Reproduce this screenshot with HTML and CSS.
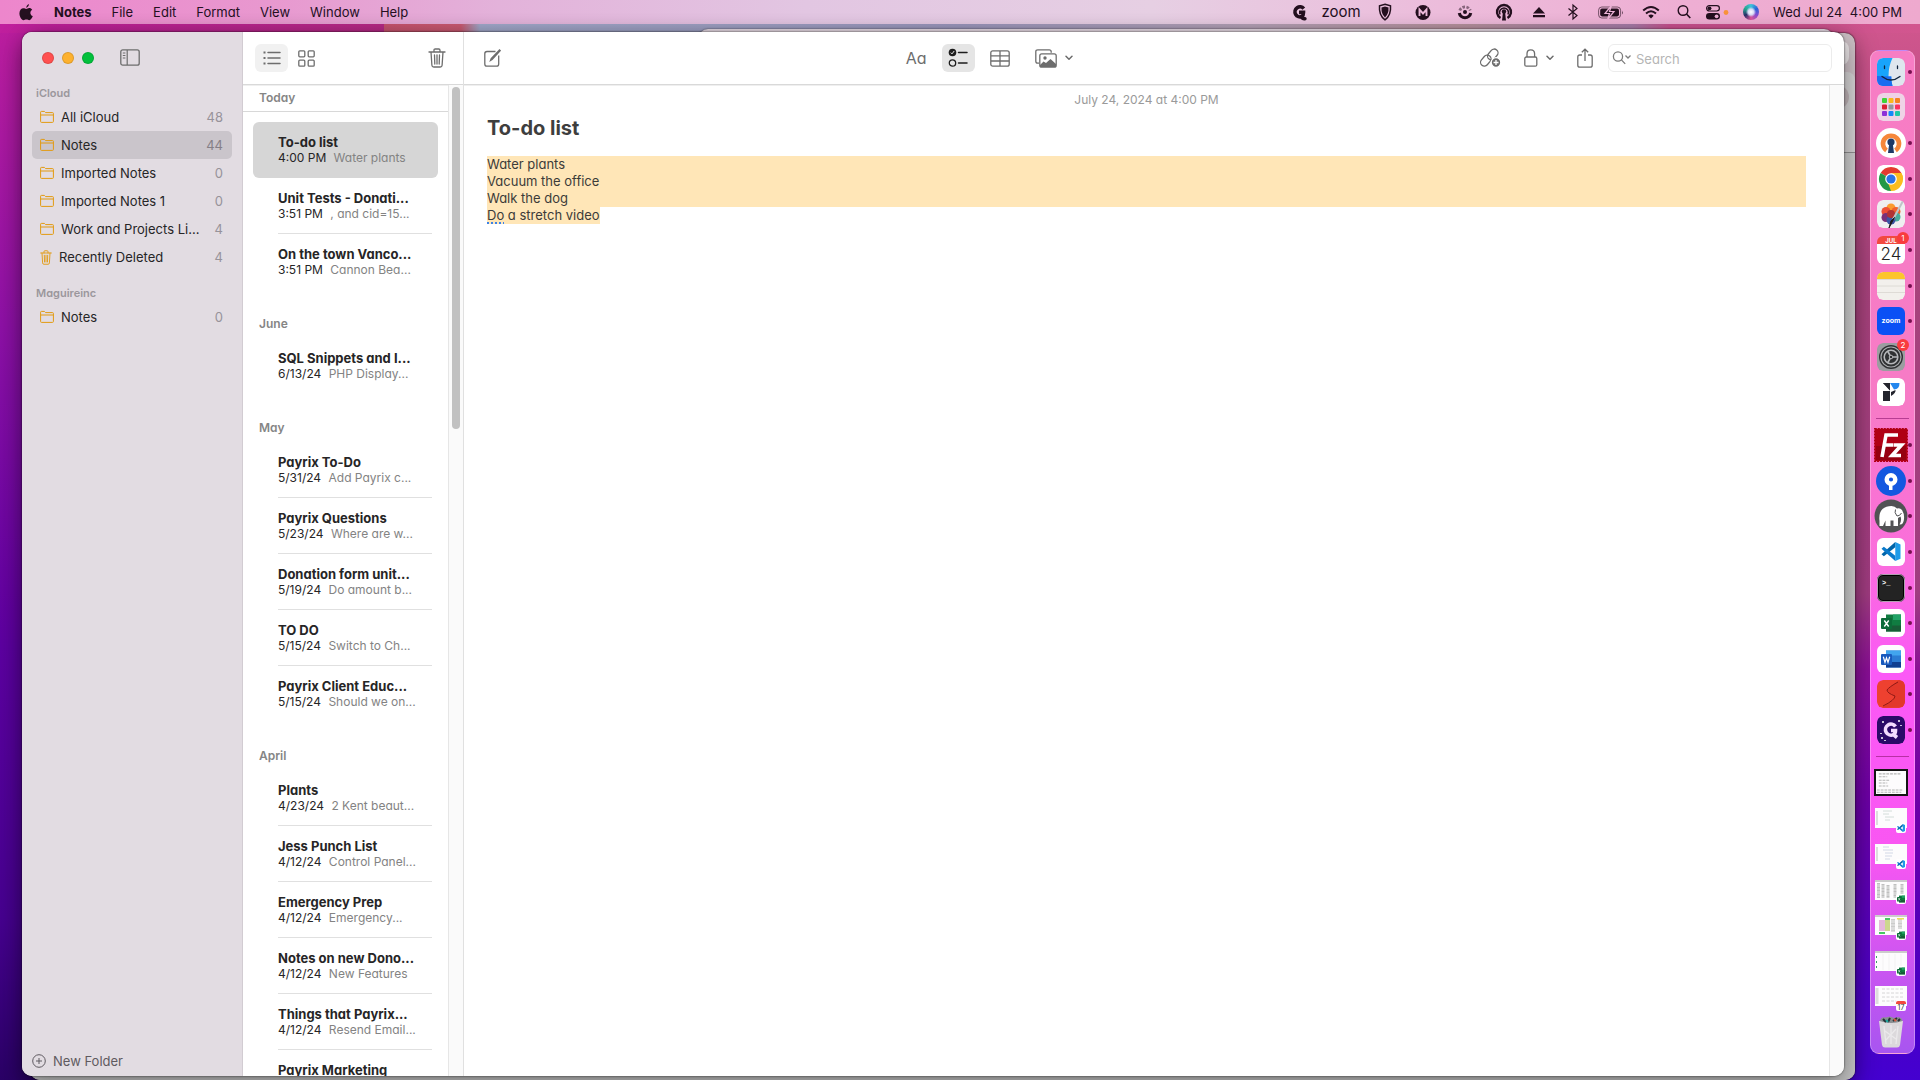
FILE: index.html
```html
<!DOCTYPE html>
<html lang="en">
<head>
    <meta charset="UTF-8">
    <meta name="viewport" content="width=device-width, initial-scale=1.0">
    <title>Notes</title>
    <link rel="stylesheet" href="styles.css">
</head>
<body>

    <!-- Shared icons -->
    <svg class="sprite" aria-hidden="true">
        <symbol id="folder" viewBox="0 0 14 14">
            <path d="M.6 11.500V2.200q0-.8.8-.8h3l1.200 1.200h7q.8 0 .8.8v8.100q0 .9-.9.9H1.500q-.9 0-.9-.9zM.6 5h12.800" fill="none" stroke="currentColor"/>
        </symbol>
        <symbol id="trash" viewBox="0 0 18 20" preserveAspectRatio="none">
            <path d="M1 4h16M6 4V2.200q0-1.200 1.200-1.200h3.600q1.200 0 1.200 1.200V4M3 4l.9 13.200q.1 1.800 1.900 1.800h6.400q1.800 0 1.900-1.800L15 4M6.500 7l.3 9M9 7v9M11.500 7l-.3 9" fill="none" stroke="currentColor" stroke-width="1.300" stroke-linecap="round"/>
        </symbol>
        <symbol id="chevron" viewBox="0 0 8 6">
            <path d="M1 1.200l3 3 3-3" fill="none" stroke="currentColor" stroke-width="1.500" stroke-linecap="round" stroke-linejoin="round"/>
        </symbol>
        <symbol id="vscode" viewBox="0 0 20 20">
            <path d="M14.500 0L20 2.500v15L14.500 20z" fill="#1e9be9"/>
            <path d="M14.500 0v5.500L2.500 15 0 13z" fill="#0065a9"/>
            <path d="M14.500 20v-5.500L2.500 5 0 7z" fill="#0a7acb"/>
        </symbol>
        <symbol id="excel" viewBox="0 0 20 17">
            <path d="M5 0h15v17H5z" fill="#107c41"/>
            <path d="M12 0h8v5.500h-8z" fill="#21a366"/>
            <path d="M5 11h15v6H5z" fill="#185c37"/>
            <rect y="3.500" width="11" height="11" rx="1" fill="#0b6b38"/>
            <path d="M3.300 6l4.400 6M7.700 6l-4.400 6" stroke="#fff" stroke-width="1.400"/>
        </symbol>
    </svg>

    <header class="menubar">
        <nav class="menus" aria-label="Menu bar">
            <button class="apple" aria-label="Apple">
                <svg width="14" height="17" viewBox="0 0 14 17"><path d="M10 0q.2 2.600-2.600 3.900Q7 1.500 10 0zM7.200 4.900c1 0 1.600-.8 3-.8 1.200 0 2.300.6 3 1.600-2.700 1.700-2.300 5.300.6 6.400-.7 2-2.100 4.100-3.500 4.100-1.100 0-1.500-.7-2.900-.7s-1.900.7-2.900.7C2.500 16.200.4 12.500.4 9.300c0-3.200 2-5.100 4-5.100 1.300 0 2 .7 2.800.7z" fill="currentColor"/></svg>
            </button>
            <button class="app-name">Notes</button>
            <button>File</button>
            <button>Edit</button>
            <button>Format</button>
            <button>View</button>
            <button>Window</button>
            <button>Help</button>
        </nav>
        <div class="status">
            <svg width="16" height="18" viewBox="0 0 16 18"><path d="M12.800 5.600A5 5 0 1 0 11 13.400q1.500-1 1.500-4H8" fill="none" stroke="currentColor" stroke-width="3.600"/><path d="M10.500 13.500q1 2.500 3.500 2.200" fill="none" stroke="currentColor" stroke-width="3.400" stroke-linecap="round"/></svg>
            <span class="zoom-word">zoom</span>
            <svg width="20" height="18" viewBox="0 0 14 18"><path d="M7 1.200l5.500 1.600q.8 9.700-5.500 14Q.7 12.500 1.500 2.800z" fill="none" stroke="currentColor" stroke-width="1.500"/><path d="M7 3.600l3.500 1q.4 6.600-3.500 9.800Q3.100 11.200 3.500 4.600z" fill="currentColor"/></svg>
            <svg width="28" height="18" viewBox="0 0 16 18"><circle cx="8" cy="9.500" r="7.500" fill="currentColor"/><path d="M4.500 13V6.500L8 10.500l3.500-4V13" fill="none" stroke="#ecb8d9" stroke-width="1.900"/></svg>
            <svg width="28" height="18" viewBox="0 0 16 18"><path d="M2.300 10a5.800 5.800 0 0 0 11.400 0" fill="none" stroke="currentColor" stroke-width="3.200"/><path d="M2.800 7.500a5.500 5.500 0 0 1 10.400 0" fill="none" stroke="currentColor" stroke-width="2.800" stroke-dasharray="2.600 1.500" opacity=".5"/><circle cx="8" cy="9" r="2" fill="currentColor"/></svg>
            <svg width="22" height="18" viewBox="0 0 18 18"><path d="M5.500 15A7 7 0 1 1 12.500 15" fill="none" stroke="currentColor" stroke-width="2.400"/><path d="M5 11.500a4.500 4.500 0 1 1 8 0" fill="none" stroke="currentColor" stroke-width="1.600"/><circle cx="9" cy="8.500" r="2.200" fill="currentColor"/><path d="M8 9h2l1 8.500H7z" fill="currentColor"/></svg>
            <svg width="20" height="18" viewBox="0 0 14 18"><path d="M7 4l6 6.500H1zM1 12h12v2.200H1z" fill="currentColor"/></svg>
            <svg width="20" height="18" viewBox="0 0 12 18"><path d="M1.500 5.500l8.500 7-4 3.500V2l4 3.500-8.500 7" fill="none" stroke="currentColor" stroke-width="1.200"/></svg>
            <svg width="28" height="18" viewBox="0 0 26 18"><rect x=".6" y="4" width="22" height="11" rx="3.200" fill="none" stroke="currentColor" opacity=".6"/><rect x="2.200" y="5.600" width="18.800" height="7.800" rx="1.800" fill="currentColor"/><path d="M13.500 2.500L7 10.500h4.500l-2 6L16 8.500h-4.500z" fill="currentColor" stroke="#ecb3d7" stroke-width="1.200"/><path d="M24 7.500q1.600 2 0 4z" fill="currentColor" opacity=".7"/></svg>
            <svg width="24" height="18" viewBox="0 0 18 18"><path d="M1.200 7.500q7.800-7 15.600 0M4 10.500q5-4.500 10 0" fill="none" stroke="currentColor" stroke-width="2"/><path d="M6.300 12.800q2.700-2.400 5.400 0L9 15.600z" fill="currentColor"/></svg>
            <svg width="14" height="18" viewBox="0 0 14 18"><circle cx="6" cy="7.500" r="4.800" fill="none" stroke="currentColor" stroke-width="1.400"/><path d="M9.500 11l3.800 4" stroke="currentColor" stroke-width="1.600"/></svg>
            <svg width="24" height="18" viewBox="0 0 24 18"><rect x="1.600" y="2.600" width="12.800" height="5.400" rx="2.700" fill="none" stroke="currentColor" stroke-width="1.200"/><circle cx="4.500" cy="5.300" r="1.900" fill="currentColor"/><rect x="1" y="10" width="14" height="6.600" rx="3.300" fill="currentColor"/><circle cx="11.600" cy="13.300" r="1.900" fill="#ecaed4"/><circle cx="21" cy="9.500" r="2.400" fill="#f8923a"/></svg>
            <span class="siri"></span>
            <time>Wed Jul 24&nbsp; 4:00 PM</time>
        </div>
    </header>

    <main class="desktop">
        <div class="back-window wide">
            <span class="pane"></span>
            <span class="tab"></span>
            <span class="avatar"></span>
        </div>
        <div class="back-window top"></div>

        <section class="window" aria-label="Notes">
            <aside class="sidebar">
                <div class="titlebar">
                    <button class="light red" aria-label="Close"></button>
                    <button class="light yellow" aria-label="Minimize"></button>
                    <button class="light green" aria-label="Zoom"></button>
                    <button class="icon-btn toggle" aria-label="Toggle sidebar">
                        <svg width="20" height="17" viewBox="0 0 20 17"><rect x=".8" y=".8" width="18.400" height="15.400" rx="2" fill="none" stroke="currentColor" stroke-width="1.300"/><path d="M7.200 1v15" stroke="currentColor" stroke-width="1.200"/><path d="M2.800 4h2.600M2.800 6.500h2.600M2.800 9h2.600" stroke="currentColor"/></svg>
                    </button>
                </div>
                <h2>iCloud</h2>
                <ul class="folders">
                    <li><a href="#"><svg><use href="#folder"/></svg><span>All iCloud</span><b>48</b></a></li>
                    <li><a href="#" class="selected"><svg><use href="#folder"/></svg><span>Notes</span><b>44</b></a></li>
                    <li><a href="#"><svg><use href="#folder"/></svg><span>Imported Notes</span><b>0</b></a></li>
                    <li><a href="#"><svg><use href="#folder"/></svg><span>Imported Notes 1</span><b>0</b></a></li>
                    <li><a href="#"><svg><use href="#folder"/></svg><span>Work and Projects Li...</span><b>4</b></a></li>
                    <li><a href="#"><svg class="bin"><use href="#trash"/></svg><span>Recently Deleted</span><b>4</b></a></li>
                </ul>
                <h2>Maguireinc</h2>
                <ul class="folders">
                    <li><a href="#"><svg><use href="#folder"/></svg><span>Notes</span><b>0</b></a></li>
                </ul>
                <button class="new-folder">
                    <svg width="14" height="14" viewBox="0 0 14 14"><circle cx="7" cy="7" r="6.300" fill="none" stroke="currentColor"/><path d="M7 4v6M4 7h6" stroke="currentColor"/></svg>
                    New Folder
                </button>
            </aside>

            <div class="list-pane">
                <div class="toolbar list-toolbar">
                    <button class="icon-btn light-on" aria-label="List view">
                        <svg width="18" height="14" viewBox="0 0 18 14"><path d="M5 1.500h12M5 7h12M5 12.500h12" stroke="currentColor" stroke-width="1.500" stroke-linecap="round"/><path d="M.5 1.500h2M.5 7h2M.5 12.500h2" stroke="currentColor" stroke-width="2"/></svg>
                    </button>
                    <button class="icon-btn" aria-label="Gallery view">
                        <svg width="17" height="17" viewBox="0 0 17 17" fill="none" stroke="currentColor" stroke-width="1.300"><rect x=".8" y=".8" width="6" height="6" rx="1"/><rect x="10.200" y=".8" width="6" height="6" rx="1"/><rect x=".8" y="10.200" width="6" height="6" rx="1"/><rect x="10.200" y="10.200" width="6" height="6" rx="1"/></svg>
                    </button>
                    <button class="icon-btn delete" aria-label="Delete"><svg width="18" height="20"><use href="#trash"/></svg></button>
                </div>
                <div class="list-body">
                    <div class="notes">
                        <h3 class="pinned">Today</h3>
                        <ul>
                            <li class="selected"><strong>To-do list</strong><p><time>4:00 PM</time> Water plants</p></li>
                            <li><strong>Unit Tests - Donati...</strong><p><time>3:51 PM</time> , and cid=15...</p></li>
                            <li><strong>On the town Vanco...</strong><p><time>3:51 PM</time> Cannon Bea...</p></li>
                        </ul>
                        <h3>June</h3>
                        <ul>
                            <li><strong>SQL Snippets and I...</strong><p><time>6/13/24</time> PHP Display...</p></li>
                        </ul>
                        <h3>May</h3>
                        <ul>
                            <li><strong>Payrix To-Do</strong><p><time>5/31/24</time> Add Payrix c...</p></li>
                            <li><strong>Payrix Questions</strong><p><time>5/23/24</time> Where are w...</p></li>
                            <li><strong>Donation form unit...</strong><p><time>5/19/24</time> Do amount b...</p></li>
                            <li><strong>TO DO</strong><p><time>5/15/24</time> Switch to Ch...</p></li>
                            <li><strong>Payrix Client Educ...</strong><p><time>5/15/24</time> Should we on...</p></li>
                        </ul>
                        <h3>April</h3>
                        <ul>
                            <li><strong>Plants</strong><p><time>4/23/24</time> 2 Kent beaut...</p></li>
                            <li><strong>Jess Punch List</strong><p><time>4/12/24</time> Control Panel...</p></li>
                            <li><strong>Emergency Prep</strong><p><time>4/12/24</time> Emergency...</p></li>
                            <li><strong>Notes on new Dono...</strong><p><time>4/12/24</time> New Features</p></li>
                            <li><strong>Things that Payrix...</strong><p><time>4/12/24</time> Resend Email...</p></li>
                            <li><strong>Payrix Marketing</strong></li>
                        </ul>
                    </div>
                    <div class="scroller"><div class="thumb"></div></div>
                </div>
            </div>

            <div class="editor">
                <div class="toolbar editor-toolbar">
                    <div class="tools">
                        <button class="icon-btn" aria-label="New note">
                            <svg width="17" height="18" viewBox="0 0 17 18" fill="none" stroke="currentColor" stroke-width="1.300"><path d="M11.500 2.500H3q-2.200 0-2.200 2.200V15q0 2.200 2.200 2.200h9.500q2.200 0 2.200-2.200V6.500"/><path d="M6.500 11.500l.7-1.900L15.500 1l.7.700-8.100 8.800z"/></svg>
                        </button>
                    </div>
                    <div class="tools format">
                        <button class="icon-btn text-format">Aa</button>
                        <button class="icon-btn dark-on" aria-label="Checklist">
                            <svg width="20" height="20" viewBox="0 0 20 20"><circle cx="4.500" cy="4.500" r="3.800" fill="currentColor"/><path d="M2.800 4.600l1.200 1.300 2.200-2.900" fill="none" stroke="#e5e5e5"/><circle cx="4.500" cy="15" r="3.200" fill="none" stroke="currentColor" stroke-width="1.300"/><path d="M10.500 4.500h8.500M10.500 15h8.500" stroke="currentColor" stroke-width="1.500" stroke-linecap="round"/></svg>
                        </button>
                        <button class="icon-btn" aria-label="Table">
                            <svg width="20" height="17" viewBox="0 0 20 17" fill="none" stroke="currentColor" stroke-width="1.300"><rect x=".8" y=".8" width="18.400" height="15.400" rx="2"/><path d="M1 5.800h18M1 11h18M10 1v15"/></svg>
                        </button>
                        <button class="icon-btn media" aria-label="Media">
                            <svg width="22" height="19" viewBox="0 0 22 19"><path d="M4 14.200H2.800q-2-.1-2-2V2.800q0-2 2-2h11.400q2 0 2 2v1" fill="none" stroke="currentColor" stroke-width="1.300"/><rect x="4.800" y="4.800" width="16.400" height="13.400" rx="2" fill="none" stroke="currentColor" stroke-width="1.300"/><circle cx="10" cy="9" r="1.700" fill="currentColor"/><path d="M5 16l3.500-3.500 2.500 1.500 4.500-4 5.500 5V18H5z" fill="currentColor"/></svg>
                            <svg width="8" height="6"><use href="#chevron"/></svg>
                        </button>
                    </div>
                    <div class="tools actions">
                        <button class="icon-btn" aria-label="Link">
                            <svg width="21" height="20" viewBox="0 0 21 20" fill="none" stroke="currentColor" stroke-width="1.300"><rect x="-6" y="-3.800" width="12" height="7.600" rx="3.800" transform="translate(5.800 12.600) rotate(-50)"/><rect x="-6" y="-3.800" width="12" height="7.600" rx="3.800" transform="translate(12.800 6.500) rotate(-50)"/><circle cx="16" cy="14.500" r="4.800" fill="currentColor" stroke="#fff"/><path d="M16 12v5M13.500 14.500h5" stroke="#fff"/></svg>
                        </button>
                        <button class="icon-btn lock" aria-label="Lock">
                            <svg width="14" height="18" viewBox="0 0 14 18" fill="none" stroke="currentColor" stroke-width="1.300"><rect x=".8" y="8" width="12" height="9.200" rx="1.500"/><path d="M3 8V4.800q0-4 3.800-4t3.800 4V8"/></svg>
                            <svg width="8" height="6"><use href="#chevron"/></svg>
                        </button>
                        <button class="icon-btn" aria-label="Share">
                            <svg width="16" height="20" viewBox="0 0 16 20" fill="none" stroke="currentColor" stroke-width="1.300"><path d="M5 7H2.800q-2 0-2 2v8.200q0 2 2 2h10.400q2 0 2-2V9q0-2-2-2H11M8 13V1.200M4.800 4.300L8 1.200l3.200 3.100"/></svg>
                        </button>
                        <label class="search">
                            <svg width="20" height="14" viewBox="0 0 20 14" fill="none" stroke="currentColor" stroke-width="1.300"><circle cx="6" cy="5.500" r="4.600"/><path d="M9.400 8.900l3.800 4M13.500 4.500l2.500 2.500 2.500-2.500"/></svg>
                            <input type="search" placeholder="Search" aria-label="Search">
                        </label>
                    </div>
                </div>
                <div class="editor-body">
                    <article class="note">
                        <p class="note-date">July 24, 2024 at 4:00 PM</p>
                        <h1>To-do list</h1>
                        <div class="note-text" contenteditable="true" spellcheck="false">
                            <p>Water plants</p>
                            <p>Vacuum the office</p>
                            <p>Walk the dog</p>
                            <p class="last"><span><u>Do</u> a stretch video</span></p>
                        </div>
                    </article>
                    <div class="scroller"></div>
                </div>
            </div>
        </section>

        <nav class="dock" aria-label="Dock">
            <button class="running" aria-label="Finder"><svg class="tile" viewBox="0 0 28 28"><rect width="28" height="28" rx="6" fill="#dfe6ee"/><path d="M15.500 0H6Q0 0 0 6v16q0 6 6 6h9.500q-1.500-5-1.200-9.500H11.500Q11.500 8 15.500 0z" fill="#18a4fb"/><path d="M0 18v4q0 6 6 6h9.500q-1.500-5-1.200-9.500z" fill="#1b6cf0"/><path d="M7.500 8v2.500M20.500 8v2.500M5 18.500q9 7 18 0" fill="none" stroke="#12263f" stroke-width="1.300" stroke-linecap="round"/></svg></button>
            <button aria-label="Launchpad"><svg class="tile" viewBox="0 0 28 28"><rect width="28" height="28" rx="6" fill="#efd3e6"/><rect x="5" y="5" width="5" height="5" rx="1" fill="#3ed339"/><rect x="11.500" y="5" width="5" height="5" rx="1" fill="#fbb81c"/><rect x="18" y="5" width="5" height="5" rx="1" fill="#f58220"/><rect x="5" y="11.500" width="5" height="5" rx="1" fill="#dc1f35"/><rect x="11.500" y="11.500" width="5" height="5" rx="1" fill="#93979c"/><rect x="18" y="11.500" width="5" height="5" rx="1" fill="#fb3160"/><rect x="5" y="18" width="5" height="5" rx="1" fill="#8c32d8"/><rect x="11.500" y="18" width="5" height="5" rx="1" fill="#1489f8"/><rect x="18" y="18" width="5" height="5" rx="1" fill="#20c8a5"/></svg></button>
            <button class="running" aria-label="OpenVPN"><svg class="round" viewBox="0 0 30 30"><circle cx="15" cy="15" r="15" fill="#fff"/><path d="M10.500 22.300a8 8 0 1 1 9 0" fill="none" stroke="#f6873a" stroke-width="4.600"/><circle cx="15" cy="14" r="3.600" fill="#1e3a66"/><path d="M13.300 15h3.400l1.300 10h-6z" fill="#1e3a66"/></svg></button>
            <button class="running" aria-label="Chrome"><svg class="tile" viewBox="0 0 28 28"><rect width="28" height="28" rx="6" fill="#fff"/><path d="M14 14L3.600 8A12 12 0 0 1 24.400 8z" fill="#e33b2e"/><path d="M14 14l10.400-6A12 12 0 0 1 14 26z" fill="#fbbc1f"/><path d="M14 14v12A12 12 0 0 1 3.600 8z" fill="#239847"/><path d="M14 8h10.400q1.600 3 1.600 6H16zM19 17l-5 9-3-8z" fill="#fbbc1f"/><circle cx="14" cy="14" r="5.800" fill="#fff"/><circle cx="14" cy="14" r="4.600" fill="#2a74e6"/></svg></button>
            <button class="running" aria-label="Pixelmator"><svg class="tile" viewBox="0 0 28 28"><rect width="28" height="28" rx="6" fill="#efeef0"/><circle cx="14" cy="8" r="4.500" fill="#fb9b2f"/><circle cx="9" cy="11.500" r="4.500" fill="#ee5036"/><circle cx="19" cy="11.500" r="4.500" fill="#f0622d"/><circle cx="19" cy="17" r="4.500" fill="#49ab9b"/><circle cx="9" cy="17.500" r="4.500" fill="#7a3179"/><circle cx="14" cy="20" r="4.500" fill="#3b56a5"/><circle cx="14" cy="14" r="4" fill="#b13334"/><path d="M26.500 0L16 19.500" stroke="#bfc3c8" stroke-width="2"/><path d="M17.500 17.500L12 28l2-7z" fill="#1e1e20" stroke="#1e1e20" stroke-width="1"/></svg></button>
            <button class="running" aria-label="Calendar"><span class="tile calendar"><small>JUL</small>24</span><i class="badge">1</i></button>
            <button class="running" aria-label="Notes"><svg class="tile" viewBox="0 0 28 28"><rect width="28" height="28" rx="6" fill="#f2f0ec"/><path d="M0 7V6q0-6 6-6h16q6 0 6 6v1z" fill="#fcc52c"/><path d="M0 7.500h28M0 14h28M0 20.500h28" stroke="#d8d5d0" stroke-width=".8"/></svg></button>
            <button class="running" aria-label="Zoom"><span class="tile zoom-app">zoom</span></button>
            <button aria-label="System Settings"><svg class="tile" viewBox="0 0 28 28"><rect width="28" height="28" rx="6" fill="#9b9da0"/><circle cx="14" cy="14" r="12" fill="#2f3133"/><circle cx="14" cy="14" r="10" fill="none" stroke="#a8aaad" stroke-width="1.200"/><circle cx="14" cy="14" r="6.800" fill="none" stroke="#b5b7ba" stroke-width="1.600"/><path d="M14 14h7M14 14l-3.500-6M14 14l-3.500 6" stroke="#b5b7ba" stroke-width="1.600"/><circle cx="14" cy="14" r="1.800" fill="#2f3133" stroke="#b5b7ba"/></svg><i class="badge">2</i></button>
            <button aria-label="Payrix"><svg class="tile" viewBox="0 0 28 28"><rect width="28" height="28" rx="6" fill="#fff"/><path d="M6 5h7v8z" fill="#23242d"/><path d="M6 6v7h7v10H6z" fill="#23242d"/><path d="M6 6l7 7H6z" fill="#fff"/><path d="M6 13h7v10H6zM6 5h7v6z" fill="#23242d"/><path d="M13 5h9.500q0 6-5.500 6.500z" fill="#2386ee"/><path d="M14 18v-4l4.500-2q.5 3-4.500 6z" fill="#23242d"/></svg></button>
            <hr>
            <button class="running" aria-label="FileZilla"><svg class="big" viewBox="0 0 34 34"><rect x=".8" y=".8" width="32.400" height="32.400" fill="#b00014" stroke="#b00014" stroke-width="1.600" stroke-dasharray="2 1"/><path d="M2 18h30v14H2z" fill="#96000f"/><path d="M8 29L12 7h12M10 17h9M19.500 17h8L18 27.500h9" fill="none" stroke="#fff" stroke-width="3.600"/></svg></button>
            <button class="running" aria-label="Sourcetree"><svg class="round" viewBox="0 0 30 30"><circle cx="15" cy="15" r="15" fill="#1457e0"/><circle cx="15" cy="13.500" r="4.300" fill="none" stroke="#fff" stroke-width="4.400"/><path d="M13 18h3.500v6H13z" fill="#fff"/></svg></button>
            <button class="running" aria-label="MAMP"><svg class="big" viewBox="0 0 34 34"><circle cx="17" cy="17" r="16.500" fill="#515254"/><path d="M5.500 22q-1-8 3-12 3.500-3 9-3 3.500 0 5.500 2.500 3-1 5 1.500 2.500 4 2 9-.5 6-4.500 5.500 2.500-4 1-8l-2.500 1.500V27h-4.500v-5.500h-3V27h-5v-5.500l-2.500 5.500H5.500z" fill="#fff"/><path d="M21.500 10.500q-1.500 3 1.500 6.500 3 0 4.500-3" fill="none" stroke="#515254"/></svg></button>
            <button class="running" aria-label="Visual Studio Code"><span class="tile white"><svg width="20" height="19"><use href="#vscode"/></svg></span></button>
            <button class="running" aria-label="Terminal"><span class="tile terminal">&gt;_</span></button>
            <button class="running" aria-label="Excel"><span class="tile white"><svg width="20" height="18"><use href="#excel"/></svg></span></button>
            <button class="running" aria-label="Word"><span class="tile white"><svg width="20" height="18" viewBox="0 0 20 17"><path d="M5 0h15v17H5z" fill="#2b7cd3"/><path d="M5 0h15v5H5z" fill="#41a5ee"/><path d="M5 11.500h15V17H5z" fill="#103f91"/><rect y="3.500" width="11" height="11" rx="1" fill="#185abd"/><path d="M2.300 6.300L4 11.800l1.500-4.500L7 11.800l1.700-5.500" fill="none" stroke="#fff" stroke-width="1.200"/></svg></span></button>
            <button class="running" aria-label="Sublime"><svg class="tile" viewBox="0 0 28 28"><rect width="28" height="28" rx="6" fill="#ee4130"/><path d="M22 0q-9 7-12 10 0 3 8 6 0 4-13 11.500h17q6 0 6-6V6q0-6-6-6z" fill="#e2382a"/><path d="M21 2q-9 5-11 8 0 3 8 6 0 4-12 10" fill="none" stroke="#8f1a16"/></svg></button>
            <button class="running" aria-label="Grammar"><svg class="tile" viewBox="0 0 28 28"><rect width="28" height="28" rx="6" fill="#2a0a68"/><path d="M18.500 10.500a5.500 5.500 0 1 0-2 8q2-1 2-4H14M17 19l3 2.500" fill="none" stroke="#f3dcff" stroke-width="3.600"/><path d="M6 5v2M22 4v2M24 9v1M5 21v2M8 24v1M4 17v1" stroke="#fff" stroke-width="1.500"/></svg></button>
            <hr>
            <button aria-label="Minimized window"><svg class="thumb-win framed" viewBox="0 0 32 20" preserveAspectRatio="none"><path d="M3 2.500h24M3 5h9M3 8h12M3 10.500h9M3 13h10M1 16.500h28M1 18.500h26" stroke="#b4b4b4" stroke-width=".9" stroke-dasharray="3 1"/></svg></button>
            <button aria-label="Minimized code window"><svg class="thumb-win" viewBox="0 0 32 20"><path d="M2 3v14" stroke="#ddd" stroke-width="2"/><path d="M8 3h9M8 6h6M10 9h9M10 12h5" stroke="#c9d6d0" stroke-width=".8"/></svg><span class="mini"><svg><use href="#vscode"/></svg></span></button>
            <button aria-label="Minimized code window"><svg class="thumb-win" viewBox="0 0 32 20"><path d="M2 3v14" stroke="#ddd" stroke-width="2"/><path d="M8 3h6M8 6h10M10 9h8M10 12h7M10 15h5" stroke="#c6cfe0" stroke-width=".8"/></svg><span class="mini"><svg><use href="#vscode"/></svg></span></button>
            <button aria-label="Minimized spreadsheet"><svg class="thumb-win" viewBox="0 0 32 20"><path d="M0 1h32" stroke="#ccc" stroke-width="2"/><path d="M3.500 3v15M8 4v14M13 5v13M20 4v14M27 4v10" stroke="#aaa" stroke-width="3" stroke-dasharray=".8 .6"/></svg><span class="mini"><svg><use href="#excel"/></svg></span></button>
            <button aria-label="Minimized spreadsheet"><svg class="thumb-win" viewBox="0 0 32 20"><path d="M0 1h32" stroke="#ccc" stroke-width="2"/><path d="M4 5h6v11H4z" fill="#e6b8dd"/><path d="M10 5h5v11h-5z" fill="#cdd88d"/><path d="M10 3h5v2h-5zM4 17h6v2H4z" fill="#46c763"/><path d="M18 4v13M25 4v10" stroke="#bbb" stroke-width="4" stroke-dasharray=".8 .6"/><path d="M22 3h7v1.500h-7z" fill="#ece255"/></svg><span class="mini"><svg><use href="#excel"/></svg></span></button>
            <button aria-label="Minimized spreadsheet"><svg class="thumb-win" viewBox="0 0 32 20"><path d="M0 1h32" stroke="#ccc" stroke-width="2"/><path d="M1.500 5v13" stroke="#3f9c6a" stroke-dasharray="2 3"/><path d="M8 3v16M14 3v16M20 3v16M26 3v16" stroke="#eee" stroke-width=".7"/></svg><span class="mini"><svg><use href="#excel"/></svg></span></button>
            <button aria-label="Minimized calendar"><svg class="thumb-win" viewBox="0 0 32 20"><path d="M2 2v16" stroke="#ddd" stroke-width="3"/><path d="M7 3h22M7 7h22M7 11h22M7 15h14" stroke="#ccc" stroke-width=".8" stroke-dasharray="3 1.500"/></svg><span class="mini date">17</span></button>
            <button aria-label="Trash"><svg width="26" height="32" viewBox="0 0 26 32"><path d="M1 5h24l-3 24q-.5 2.500-3 2.500H7q-2.500 0-3-2.500z" fill="#dcd9dc"/><path d="M1.500 5q2-5 6-3.500L12 .5l4 1.500 5-1q3 1 3.500 4-11 4-23 0z" fill="#8a8f92"/><path d="M5 3l3 3M12 2l-2 4M15 5l4-3M20 5l2-2" stroke="#263238" stroke-width="2"/><path d="M8 4l2 2" stroke="#21a9a0" stroke-width="2"/><path d="M16 3l2 2" stroke="#d8553c" stroke-width="2"/><path d="M6 10l2 18M13 9v19M20 10l-2 18M7 15l11 8M18 13L8 24" stroke="#ebe9eb" stroke-width="1.300"/></svg></button>
        </nav>
    </main>

</body>
</html>
```
FILE: styles.css
```css
* {
    box-sizing: border-box;
}

body {
    margin: 0;
    height: 100vh;
    display: flex;
    flex-direction: column;
    overflow: hidden;
    font-family: Inter, "Liberation Sans", sans-serif;
    font-size: 13px;
    font-feature-settings: "cv11";
    color: #262526;
    background:
        linear-gradient(90deg, #c01f9e 0, #b82a86 20%, #c8546f 20%, #cb5a72 24%, #a2a9cb 25%, #9a96bb 50%, #b3a0b5 65%, #b5909c 76%, #a57ba6 85%, #c8508d 87%, #d2568f 100%) 0 24px / 100% 9px no-repeat,
        linear-gradient(#c01f9e 0, #8d11a5 30%, #5c00a0 60%, #46008f 85%, #2a0066 100%) left / 50% 100% no-repeat,
        linear-gradient(#d4588f 0, #a8437c 25%, #a03c80 55%, #8a1096 62%, #6a00a8 75%, #4a00c4 92%, #4400d0 100%) right / 50% 100% no-repeat;
}

button {
    padding: 0;
    border: 0;
    background: none;
    color: inherit;
    font: inherit;
    font-feature-settings: inherit;
}

ul {
    list-style: none;
    margin: 0;
    padding: 0;
}

p, h1, h2, h3 {
    margin: 0;
}

.sprite {
    position: absolute;
    width: 0;
    height: 0;
}

/* Menu bar */
.menubar {
    height: 24px;
    flex: none;
    display: flex;
    justify-content: space-between;
    align-items: center;
    color: #24101f;
    background: linear-gradient(90deg, #ed86cc 0, #e898cf 14%, #e3b2da 26%, #e2c6e2 42%, #e6cfe3 60%, #ecbcdb 75%, #eeaed3 88%, #eea9ce 100%);
}

.menus {
    display: flex;
    align-items: center;
    padding-left: 8px;
}

.menus button {
    padding: 0 10px;
    height: 23px;
}

.menus .apple {
    padding: 3px 11px 0;
}

.menus .app-name {
    font-weight: 700;
}

.status {
    display: flex;
    align-items: center;
    gap: 14px;
    padding-right: 18px;
}

.zoom-word {
    width: 40px;
    line-height: 20px;
    font-size: 15px;
    text-align: center;
}

.siri {
    width: 16px;
    height: 16px;
    border-radius: 50%;
    background: radial-gradient(circle, #fff 0, #d7d9f5 25%, transparent 45%), conic-gradient(#3fc3d8, #2b62d8, #8a4cd0, #e0569b, #2a2f6a, #27a58d, #3fc3d8);
}

/* Windows */
.desktop {
    flex: 1;
    position: relative;
}

.back-window {
    position: absolute;
    border-radius: 10px;
}

.back-window.wide {
    inset: 9px 65px 0 30px;
    overflow: hidden;
    background: #cbbfc4;
    box-shadow: 0 0 2px #000, 0 8px 24px rgba(0, 0, 0, 0.35);
}

.back-window span {
    position: absolute;
}

.pane {
    inset: 39px 0 0;
    border-radius: 0 8px 0 0;
    background: linear-gradient(#d3d1d2 80px, #8f8f8f 80px, #8f8f8f 81px, #cbcbcb 81px, #c4c4c4);
}

.tab {
    top: 8px;
    right: 6px;
    width: 40px;
    height: 24px;
    border-radius: 8px;
    background: #e8e3e5;
}

.avatar {
    top: 52px;
    right: 6px;
    width: 28px;
    height: 24px;
    border-radius: 12px;
    background: #bdb2b5;
}

.back-window.top {
    inset: 5px 86px auto 698px;
    height: 60px;
    background: #dbd0d9;
    box-shadow: 0 0 2px rgba(0, 0, 0, 0.6);
}

.window {
    position: absolute;
    inset: 8px 76px 4px 22px;
    display: grid;
    grid-template-columns: 221px 221px 1fr;
    border-radius: 10px;
    overflow: hidden;
    background: #fff;
    box-shadow: 0 0 2px rgba(0, 0, 0, 0.8), 0 8px 24px rgba(0, 0, 0, 0.4);
}

/* Sidebar */
.sidebar {
    display: flex;
    flex-direction: column;
    background: #e2dce2;
    border-right: 1px solid #d2ccd2;
}

.titlebar {
    display: flex;
    align-items: center;
    gap: 8px;
    height: 51px;
    padding-left: 20px;
}

.light {
    width: 12px;
    height: 12px;
    border-radius: 50%;
    border: 1px solid rgba(0, 0, 0, 0.12);
}

.red {
    background: #ff5050;
}

.yellow {
    background: #fdb12f;
}

.green {
    background: #02c03c;
}

.toggle {
    margin-left: 18px;
}

.sidebar h2 {
    padding-left: 14px;
    height: 20px;
    line-height: 20px;
    font-size: 11px;
    font-weight: 600;
    color: #9b979c;
}

.folders {
    margin: 0 10px 12px;
}

.folders a {
    display: flex;
    align-items: center;
    gap: 7px;
    height: 28px;
    padding: 0 9px 0 8px;
    border-radius: 5px;
    color: inherit;
    text-decoration: none;
}

.folders .selected {
    background: #cac5cb;
}

.folders svg {
    width: 14px;
    height: 14px;
    color: #e29a10;
}

.folders .bin {
    width: 12px;
    height: 15px;
}

.folders span {
    flex: 1;
}

.folders b {
    font-weight: 400;
    color: #97939a;
}

.folders .selected b {
    color: #858087;
}

.new-folder {
    display: flex;
    align-items: center;
    gap: 7px;
    height: 30px;
    margin-top: auto;
    padding-left: 10px;
    color: #5f5a60;
}

/* Toolbars */
.toolbar {
    display: flex;
    align-items: center;
    height: 53px;
    border-bottom: 1px solid #d9d9d9;
    box-shadow: 0 1px #efefef;
}

.icon-btn {
    display: flex;
    align-items: center;
    justify-content: center;
    height: 28px;
    border-radius: 6px;
    color: #6d6d6d;
}

.light-on {
    width: 33px;
    background: #f1f1f1;
}

.dark-on {
    width: 33px;
    background: #e5e5e5;
    color: #1d1d1d;
}

.list-pane,
.editor {
    display: flex;
    flex-direction: column;
    min-height: 0;
    min-width: 0;
}

.list-pane {
    border-right: 1px solid #e0e0e0;
}

.list-toolbar {
    gap: 10px;
    padding: 0 17px 0 12px;
}

.delete {
    margin-left: auto;
}

/* Note list */
.list-body,
.editor-body {
    flex: 1;
    display: flex;
    min-height: 0;
}

.notes {
    flex: 1;
    overflow: hidden;
}

.notes h3 {
    height: 28px;
    margin-top: 20px;
    padding-left: 16px;
    line-height: 28px;
    font-size: 12px;
    font-weight: 600;
    color: #858585;
}

.notes .pinned {
    height: 27px;
    margin: 0 0 10px;
    line-height: 26px;
    border-bottom: 1px solid #d8d8d8;
}

.notes ul {
    padding: 0 10px;
}

.notes li {
    position: relative;
    height: 56px;
    padding: 12px 20px 0 25px;
    border-radius: 6px;
    white-space: nowrap;
}

.notes li.selected {
    background: #d6d6d6;
}

.notes li:not(.selected):not(:last-child)::after {
    content: "";
    position: absolute;
    left: 25px;
    right: 6px;
    bottom: 0;
    border-bottom: 1px solid #e0e0e0;
}

.notes strong {
    display: block;
    margin-bottom: 1px;
    line-height: 16px;
}

.notes p {
    line-height: 14px;
    font-size: 12px;
    color: #838383;
}

.notes time {
    margin-right: 4px;
    color: #262526;
}

.scroller {
    width: 15px;
    padding: 2px 2px 0 3px;
    background: #fafafa;
    border-left: 1px solid #e6e6e6;
}

.thumb {
    width: 8px;
    height: 342px;
    border-radius: 4px;
    background: #c1c1c1;
}

/* Editor */
.editor-toolbar {
    display: grid;
    grid-template-columns: 5fr auto 9fr;
    padding: 0 12px 0 20px;
}

.tools {
    display: flex;
    align-items: center;
}

.format {
    gap: 15px;
}

.text-format {
    font-size: 16px;
}

.media {
    margin-left: 10px;
    gap: 8px;
}

.lock {
    gap: 8px;
}

.actions {
    justify-content: flex-end;
    gap: 23px;
}

.search {
    display: flex;
    align-items: center;
    width: 224px;
    height: 28px;
    margin-left: -8px;
    padding-left: 3px;
    gap: 4px;
    border: 1px solid #ececec;
    border-radius: 6px;
    color: #7d7d7d;
}

.search input {
    flex: 1;
    min-width: 0;
    padding: 2px 0 0;
    border: 0;
    outline: 0;
    background: none;
    font: inherit;
    font-feature-settings: inherit;
}

.search input::placeholder {
    color: #b5b5b5;
}

.note {
    flex: 1;
    padding: 8px 23px;
}

.note-date {
    line-height: 14px;
    font-size: 12px;
    text-align: center;
    color: #9a9a9a;
}

.note h1 {
    margin: 9px 0 16px;
    line-height: 24px;
    font-size: 20px;
    font-weight: 700;
    color: #3e3e3e;
}

.note-text {
    line-height: 17px;
    color: #3c3b39;
    outline: 0;
}

.note-text p {
    background: #ffe6b7;
}

.note-text .last {
    background: none;
}

.last span {
    display: inline-block;
    background: #ffe6b7;
}

.last u {
    text-decoration: underline dotted #3b82e8 2px;
    text-underline-offset: 2px;
}

/* Dock */
.dock {
    position: absolute;
    inset: 26px 5px 26px auto;
    width: 45px;
    display: flex;
    flex-direction: column;
    padding: 3px 0;
    border: 1px solid rgba(255, 255, 255, 0.3);
    border-radius: 9px;
    background: linear-gradient(#f77dc4 0, #f77bc6 35%, #fa6edb 50%, #fb59f6 62%, #f956f2 80%, #a855f0 100%);
}

.dock button {
    flex: 1;
    position: relative;
    display: flex;
    align-items: center;
    justify-content: center;
    padding-right: 3px;
}

.dock .running::after {
    content: "";
    position: absolute;
    right: 2px;
    width: 4px;
    height: 4px;
    border-radius: 50%;
    background: #75104f;
}

.dock hr {
    width: 33px;
    height: 1px;
    margin: 8px 5px;
    border: 0;
    background: rgba(140, 20, 110, 0.6);
}

.tile {
    width: 28px;
    height: 28px;
    border-radius: 6px;
}

.round {
    width: 30px;
    height: 30px;
}

.big {
    width: 34px;
    height: 34px;
    flex: none;
}

.white {
    display: flex;
    align-items: center;
    justify-content: center;
    background: #fff;
}

.calendar {
    background: linear-gradient(#f2493f 8px, #fff 8px);
    line-height: 18px;
    font-size: 17px;
    font-weight: 300;
    text-align: center;
    color: #222;
}

.calendar small {
    display: block;
    line-height: 9px;
    font-size: 6px;
    font-weight: 700;
    color: #fff;
}

.badge {
    position: absolute;
    top: 0;
    right: 5px;
    width: 12px;
    height: 12px;
    border-radius: 50%;
    background: #f93b3e;
    line-height: 12px;
    font-size: 8px;
    font-style: normal;
    text-align: center;
    color: #fff;
}

.zoom-app {
    background: #0b50f5;
    line-height: 27px;
    font-size: 7px;
    font-weight: 700;
    text-align: center;
    color: #fff;
}

.terminal {
    padding-left: 3px;
    border: 2px solid #000;
    outline: 1px solid #b0a0b0;
    outline-offset: -1px;
    background: #232323;
    line-height: 14px;
    font-family: "Liberation Mono", monospace;
    font-size: 7px;
    font-weight: 700;
    text-align: left;
    color: #fff;
}

.thumb-win {
    width: 32px;
    height: 20px;
    background: #fdfcfd;
}

.thumb-win.framed {
    flex: none;
    width: 34px;
    height: 27px;
    border: 2px solid #151515;
}

.mini {
    position: absolute;
    right: 8px;
    bottom: 3px;
    display: flex;
    align-items: center;
    justify-content: center;
    width: 10px;
    height: 10px;
    border-radius: 2px;
    background: #fff;
}

.mini svg {
    width: 8px;
    height: 8px;
}

.mini.date {
    background: linear-gradient(#f2493f 3px, #fff 3px);
    padding-top: 3px;
    font-size: 7px;
    color: #333;
}
```
